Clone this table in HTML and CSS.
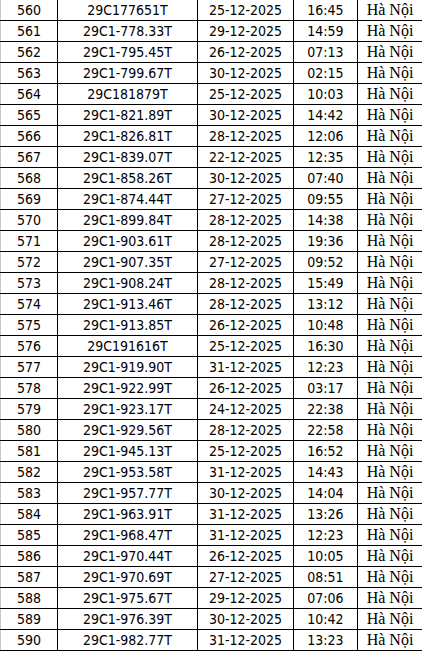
FILE: index.html
```html
<!DOCTYPE html>
<html lang="vi">
<head>
<meta charset="utf-8">
<link rel="stylesheet" href="styles.css">
</head>
<body>
<table class="plates">
<colgroup><col class="c-no"><col class="c-plate"><col class="c-date"><col class="c-time"><col class="c-city"></colgroup>
<tbody>
<tr><td>560</td><td>29C177651T</td><td>25-12-2025</td><td>16:45</td><td class="city">Hà Nội</td></tr>
<tr><td>561</td><td>29C1-778.33T</td><td>29-12-2025</td><td>14:59</td><td class="city">Hà Nội</td></tr>
<tr><td>562</td><td>29C1-795.45T</td><td>26-12-2025</td><td>07:13</td><td class="city">Hà Nội</td></tr>
<tr><td>563</td><td>29C1-799.67T</td><td>30-12-2025</td><td>02:15</td><td class="city">Hà Nội</td></tr>
<tr><td>564</td><td>29C181879T</td><td>25-12-2025</td><td>10:03</td><td class="city">Hà Nội</td></tr>
<tr><td>565</td><td>29C1-821.89T</td><td>30-12-2025</td><td>14:42</td><td class="city">Hà Nội</td></tr>
<tr><td>566</td><td>29C1-826.81T</td><td>28-12-2025</td><td>12:06</td><td class="city">Hà Nội</td></tr>
<tr><td>567</td><td>29C1-839.07T</td><td>22-12-2025</td><td>12:35</td><td class="city">Hà Nội</td></tr>
<tr><td>568</td><td>29C1-858.26T</td><td>30-12-2025</td><td>07:40</td><td class="city">Hà Nội</td></tr>
<tr><td>569</td><td>29C1-874.44T</td><td>27-12-2025</td><td>09:55</td><td class="city">Hà Nội</td></tr>
<tr><td>570</td><td>29C1-899.84T</td><td>28-12-2025</td><td>14:38</td><td class="city">Hà Nội</td></tr>
<tr><td>571</td><td>29C1-903.61T</td><td>28-12-2025</td><td>19:36</td><td class="city">Hà Nội</td></tr>
<tr><td>572</td><td>29C1-907.35T</td><td>27-12-2025</td><td>09:52</td><td class="city">Hà Nội</td></tr>
<tr><td>573</td><td>29C1-908.24T</td><td>28-12-2025</td><td>15:49</td><td class="city">Hà Nội</td></tr>
<tr><td>574</td><td>29C1-913.46T</td><td>28-12-2025</td><td>13:12</td><td class="city">Hà Nội</td></tr>
<tr><td>575</td><td>29C1-913.85T</td><td>26-12-2025</td><td>10:48</td><td class="city">Hà Nội</td></tr>
<tr><td>576</td><td>29C191616T</td><td>25-12-2025</td><td>16:30</td><td class="city">Hà Nội</td></tr>
<tr><td>577</td><td>29C1-919.90T</td><td>31-12-2025</td><td>12:23</td><td class="city">Hà Nội</td></tr>
<tr><td>578</td><td>29C1-922.99T</td><td>26-12-2025</td><td>03:17</td><td class="city">Hà Nội</td></tr>
<tr><td>579</td><td>29C1-923.17T</td><td>24-12-2025</td><td>22:38</td><td class="city">Hà Nội</td></tr>
<tr><td>580</td><td>29C1-929.56T</td><td>28-12-2025</td><td>22:58</td><td class="city">Hà Nội</td></tr>
<tr><td>581</td><td>29C1-945.13T</td><td>25-12-2025</td><td>16:52</td><td class="city">Hà Nội</td></tr>
<tr><td>582</td><td>29C1-953.58T</td><td>31-12-2025</td><td>14:43</td><td class="city">Hà Nội</td></tr>
<tr><td>583</td><td>29C1-957.77T</td><td>30-12-2025</td><td>14:04</td><td class="city">Hà Nội</td></tr>
<tr><td>584</td><td>29C1-963.91T</td><td>31-12-2025</td><td>13:26</td><td class="city">Hà Nội</td></tr>
<tr><td>585</td><td>29C1-968.47T</td><td>31-12-2025</td><td>12:23</td><td class="city">Hà Nội</td></tr>
<tr><td>586</td><td>29C1-970.44T</td><td>26-12-2025</td><td>10:05</td><td class="city">Hà Nội</td></tr>
<tr><td>587</td><td>29C1-970.69T</td><td>27-12-2025</td><td>08:51</td><td class="city">Hà Nội</td></tr>
<tr><td>588</td><td>29C1-975.67T</td><td>29-12-2025</td><td>07:06</td><td class="city">Hà Nội</td></tr>
<tr><td>589</td><td>29C1-976.39T</td><td>30-12-2025</td><td>10:42</td><td class="city">Hà Nội</td></tr>
<tr><td>590</td><td>29C1-982.77T</td><td>31-12-2025</td><td>13:23</td><td class="city">Hà Nội</td></tr>
</tbody>
</table>
</body>
</html>
```

FILE: styles.css
```css
html, body {
  margin: 0;
  padding: 0;
  background: #fff;
  overflow: hidden;
}

.plates {
  border-collapse: collapse;
  table-layout: fixed;
  width: 422px;
  margin-top: -1px;
  font-family: "DejaVu Sans Condensed", "DejaVu Sans", sans-serif;
  font-size: 14px;
  color: #000;
}

.c-no { width: 57px; }
.c-plate { width: 140px; }
.c-date { width: 96px; }
.c-time { width: 64px; }
.c-city { width: 65px; }

.plates td {
  border: 1px solid #000;
  height: 20px;
  padding: 0;
  text-align: center;
  vertical-align: middle;
  line-height: 20px;
  white-space: nowrap;
}

.plates td:first-child {
  border-left-color: #c8c8c8;
}

.plates td.city {
  font-family: "Liberation Serif", serif;
  font-size: 16px;
}
```
